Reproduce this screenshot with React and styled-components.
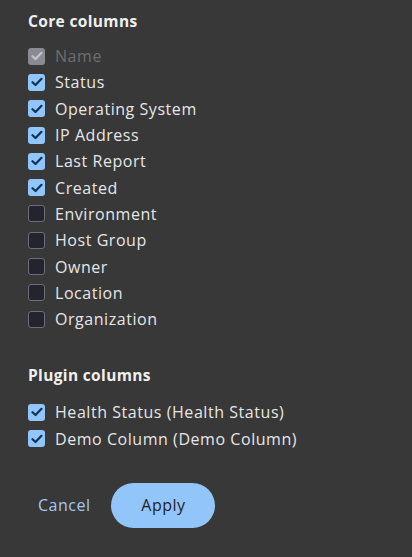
import styled, { createGlobalStyle } from "styled-components";

const GlobalStyle = createGlobalStyle`
  html, body {
    margin: 0;
    background: #383838;
  }
  body {
    font-family: "Open Sans", "Noto Sans", sans-serif;
  }
`;

const coreColumns = [
  { label: "Name", checked: true, disabled: true },
  { label: "Status", checked: true },
  { label: "Operating System", checked: true },
  { label: "IP Address", checked: true },
  { label: "Last Report", checked: true },
  { label: "Created", checked: true },
  { label: "Environment" },
  { label: "Host Group" },
  { label: "Owner" },
  { label: "Location" },
  { label: "Organization" },
];

const pluginColumns = [
  { label: "Health Status (Health Status)", checked: true },
  { label: "Demo Column (Demo Column)", checked: true },
];

function Check({ checked, disabled }) {
  return (
    <Box $checked={checked} $disabled={disabled}>
      {checked && (
        <svg width="12" height="10" viewBox="0 0 12 10">
          <path
            d="M1.5 5.2 L4.5 8 L10.5 1.8"
            fill="none"
            stroke={disabled ? "#c4c4cc" : "#0b3557"}
            strokeWidth="2.2"
            strokeLinecap="round"
            strokeLinejoin="round"
          />
        </svg>
      )}
    </Box>
  );
}

function ColumnList({ items }) {
  return (
    <List>
      {items.map((item) => (
        <Row key={item.label}>
          <Check checked={item.checked} disabled={item.disabled} />
          <Label $disabled={item.disabled}>{item.label}</Label>
        </Row>
      ))}
    </List>
  );
}

export default function App() {
  return (
    <>
      <GlobalStyle />
      <Panel>
        <Heading>Core columns</Heading>
        <ColumnList items={coreColumns} />
        <Heading $plugin>Plugin columns</Heading>
        <ColumnList items={pluginColumns} />
        <Footer>
          <LinkButton>Cancel</LinkButton>
          <PrimaryButton>Apply</PrimaryButton>
        </Footer>
      </Panel>
    </>
  );
}

const Panel = styled.div`
  height: 557px;
  box-sizing: border-box;
  padding: 10px 0 0 28px;
  background: #383838;
  display: flex;
  flex-direction: column;
`;

const Heading = styled.h2`
  margin: ${(p) => (p.$plugin ? "32px 0 13px" : "0 0 11px")};
  font-size: 15.5px;
  font-weight: 700;
  letter-spacing: 0.35px;
  color: #f0f0f0;
  line-height: 22px;
`;

const List = styled.div`
  display: flex;
  flex-direction: column;
`;

const Row = styled.label`
  display: flex;
  align-items: center;
  gap: 10px;
  height: 26.3px;
`;

const Box = styled.span`
  width: 17px;
  height: 17px;
  box-sizing: border-box;
  border-radius: 3px;
  display: flex;
  align-items: center;
  justify-content: center;
  background: ${(p) =>
    p.$disabled ? "#8a8a93" : p.$checked ? "#92c5f9" : "#24242e"};
  border: ${(p) => (p.$checked ? "none" : "1.5px solid #6e6e7a")};
`;

const Label = styled.span`
  font-size: 16px;
  letter-spacing: 0.55px;
  color: ${(p) => (p.$disabled ? "#6f6f6f" : "#e6e6e6")};
  line-height: 20px;
`;

const Footer = styled.div`
  display: flex;
  align-items: center;
  gap: 21px;
  margin-top: 31px;
  padding-left: 10px;
`;

const LinkButton = styled.button`
  background: none;
  border: none;
  padding: 0;
  font-family: inherit;
  font-size: 16px;
  letter-spacing: 0.5px;
  color: #a3c8ee;
  cursor: pointer;
`;

const PrimaryButton = styled.button`
  width: 104px;
  height: 45px;
  border: none;
  border-radius: 23px;
  background: #92c5f9;
  color: #1f1f1f;
  font-family: inherit;
  font-size: 16px;
  letter-spacing: 0.5px;
  cursor: pointer;
`;
